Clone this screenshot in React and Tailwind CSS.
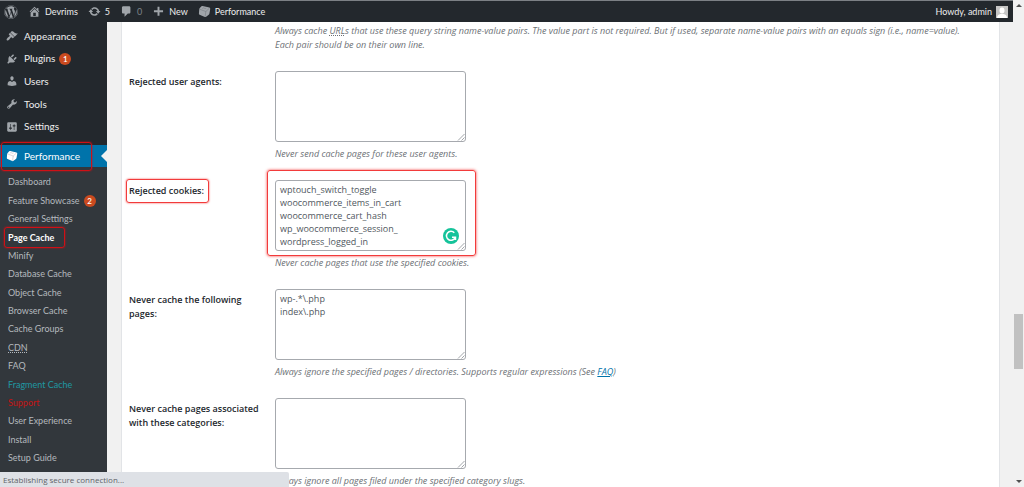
import { FaWordpress } from 'react-icons/fa6';

const ICONS = {
  home: 'M16 8.5l1.53 1.53-1.06 1.06L10 4.6l-6.47 6.49-1.06-1.06L10 2.5l4 4v-2h2v4zm-6-2.46l6 5.99V18H4v-5.97zM12 17v-5H8v5h4z',
  update:
    'M10.2 3.28c3.53 0 6.43 2.61 6.92 6h2.08l-3.5 4-3.5-4h2.32c-.45-1.97-2.21-3.45-4.32-3.45-1.45 0-2.73.71-3.54 1.78L4.95 5.66C6.23 4.2 8.11 3.28 10.2 3.28zm-.4 13.44c-3.52 0-6.43-2.61-6.92-6H.8l3.5-4c1.17 1.33 2.33 2.67 3.5 4H5.48c.45 1.97 2.21 3.45 4.32 3.45 1.45 0 2.73-.71 3.54-1.78l1.71 1.95c-1.28 1.46-3.15 2.38-5.25 2.38z',
  comment: 'M5 2h9c1.1 0 2 .9 2 2v7c0 1.1-.9 2-2 2h-2l-5 5v-5H5c-1.1 0-2-.9-2-2V4c0-1.1.9-2 2-2z',
  plus: 'M17 8v3h-5.5v5.500h-3V11H3V8h5.500V2.500h3V8z',
  appearance:
    'M14.48 11.06L7.41 3.99l1.5-1.5c.5-.56 2.3-.47 3.51.32 1.21.8 1.43 1.28 2.91 2.1 1.18.64 2.45 1.26 4.45.85zm-.71.71L6.7 4.7 4.93 6.47c-.39.39-.39 1.02 0 1.41l1.06 1.06c.39.39.39 1.03 0 1.42-.6.6-1.43 1.11-2.21 1.69-.35.26-.7.53-1.01.84C1.43 14.23.4 16.08 1.4 17.07c.99 1 2.84-.03 4.18-1.36.31-.31.58-.66.85-1.02.57-.78 1.08-1.61 1.69-2.21.39-.39 1.02-.39 1.41 0l1.06 1.06c.39.39 1.02.39 1.41 0z',
  plugins:
    'M13.11 4.36L9.87 7.6 8 5.73l3.24-3.24c.35-.34 1.05-.2 1.56.32.52.51.66 1.21.31 1.55zm-8 1.77l.91-1.12 9.01 9.01-1.19.84c-.71.71-2.63 1.16-3.82 1.16H6.14L4.9 17.26c-.59.59-1.54.59-2.12 0-.59-.58-.59-1.53 0-2.12l1.24-1.24v-3.88c0-1.13.4-3.19 1.09-3.89zm7.26 3.97l3.24-3.24c.34-.35 1.04-.21 1.55.31.52.51.66 1.21.31 1.55l-3.24 3.25z',
  users:
    'M10 9.25c-2.27 0-2.73-3.44-2.73-3.44C7 4.02 7.82 2 9.97 2c2.16 0 2.98 2.02 2.71 3.81 0 0-.41 3.44-2.68 3.44zm0 2.57L12.72 10c2.39 0 4.52 2.33 4.52 4.53v2.49s-3.65 1.13-7.24 1.13c-3.65 0-7.24-1.13-7.24-1.13v-2.49c0-2.25 1.94-4.48 4.47-4.48z',
  tools:
    'M16.68 9.77c-1.34 1.34-3.3 1.67-4.95.99l-5.41 6.52c-.99.99-2.59.99-3.58 0s-.99-2.59 0-3.57l6.52-5.42c-.68-1.65-.35-3.61.99-4.95 1.28-1.28 3.12-1.62 4.72-1.06l-2.89 2.89 2.82 2.82 2.86-2.87c.53 1.58.18 3.39-1.08 4.65zM3.81 16.21c.4.39 1.04.39 1.43 0 .4-.4.4-1.04 0-1.43-.39-.4-1.03-.4-1.43 0-.39.39-.39 1.03 0 1.43z',
  settings:
    'M18 16V4c0-1.1-.9-2-2-2H4c-1.1 0-2 .9-2 2v12c0 1.1.9 2 2 2h12c1.1 0 2-.9 2-2zM8 11h1c.55 0 1 .45 1 1s-.45 1-1 1H8v1.5c0 .28-.22.5-.5.5s-.5-.22-.5-.5V13H6c-.55 0-1-.45-1-1s.45-1 1-1h1V5.5c0-.28.22-.5.5-.5s.5.22.5.5V11zm5-2h-1c-.55 0-1-.45-1-1s.45-1 1-1h1V5.5c0-.28.22-.5.5-.5s.5.22.5.5V7h1c.55 0 1 .45 1 1s-.45 1-1 1h-1v5.5c0 .28-.22.5-.5.5s-.5-.22-.5-.5V9z',
};

const MENU = [
  { icon: 'appearance', label: 'Appearance' },
  { icon: 'plugins', label: 'Plugins', count: 1 },
  { icon: 'users', label: 'Users' },
  { icon: 'tools', label: 'Tools' },
  { icon: 'settings', label: 'Settings' },
];

const SUBMENU = [
  { label: 'Dashboard' },
  { label: 'Feature Showcase', count: 2 },
  { label: 'General Settings' },
  { label: 'Page Cache', current: true },
  { label: 'Minify' },
  { label: 'Database Cache' },
  { label: 'Object Cache' },
  { label: 'Browser Cache' },
  { label: 'Cache Groups' },
  { label: 'CDN', tone: 'underline decoration-dotted' },
  { label: 'FAQ' },
  { label: 'Fragment Cache', tone: 'text-[#1f98a3]' },
  { label: 'Support', tone: 'text-[#c41414]' },
  { label: 'User Experience' },
  { label: 'Install' },
  { label: 'Setup Guide' },
];

const COOKIES = [
  'wptouch_switch_toggle',
  'woocommerce_items_in_cart',
  'woocommerce_cart_hash',
  'wp_woocommerce_session_',
  'wordpress_logged_in',
].join('\n');

function Dashicon({ name, className }) {
  return (
    <svg viewBox="0 0 20 20" fill="currentColor" className={`shrink-0 ${className}`} aria-hidden="true">
      <path d={ICONS[name]} />
    </svg>
  );
}

function CubeIcon({ className }) {
  return (
    <svg viewBox="0 0 20 20" className={`shrink-0 ${className}`} aria-hidden="true">
      <path d="M7 1.500l10.500 2.500q1.500.5 1.300 2l-1.300 7.500q-.2 1-1 1.600l-4 3q-1 .7-2 .3L2.500 15q-1.300-.6-1.100-2l.5-6.500q.1-1 .9-1.700l2.500-2.700q.8-.8 1.700-.6z" fill="currentColor" />
      <path d="M2.500 6.500l9.500 3.500 5.500-5M12 10l-1 8" fill="none" stroke="#23282d" strokeOpacity=".3" strokeWidth="1" />
      <path d="M6.500 5.500q1.500-2 3-.7t3.300 0" fill="none" stroke="#23282d" strokeOpacity=".3" strokeWidth="1" />
    </svg>
  );
}

function Count({ children }) {
  return (
    <span className="flex size-3 shrink-0 items-center justify-center rounded-full bg-[#ca4a1f] text-[8px] leading-none font-semibold text-white">
      {children}
    </span>
  );
}

// red marker drawn over the highlighted parts
function Marker({ className }) {
  return <span className={`pointer-events-none absolute rounded-[3px] border ${className}`} aria-hidden="true" />;
}

function AdminBar() {
  return (
    <header className="flex h-[22px] shrink-0 items-center border-t border-[#7c8085] bg-[#23282d] pr-[5px] pl-1 font-['Lato','Open_Sans',sans-serif] text-[9px] text-[#eeeeee]">
      <nav className="flex flex-1 items-center gap-[10px]" aria-label="Toolbar">
        <a href="#about" aria-label="About WordPress" className="text-[#a0a5aa]">
          <FaWordpress size={14} />
        </a>
        <a href="#site" className="flex items-center gap-1">
          <Dashicon name="home" className="size-[13px] text-[#a0a5aa]" />
          Devrims
        </a>
        <a href="#updates" className="flex items-center gap-1">
          <Dashicon name="update" className="size-[13px] text-[#a0a5aa]" />
          5
        </a>
        <a href="#comments" className="flex items-center gap-1 text-[#7e8388]">
          <Dashicon name="comment" className="size-[13px] text-[#a0a5aa]" />
          0
        </a>
        <a href="#new" className="flex items-center gap-1">
          <Dashicon name="plus" className="size-[13px] text-[#a0a5aa]" />
          New
        </a>
        <a href="#performance" className="flex items-center gap-1">
          <CubeIcon className="size-[13px] text-[#a0a5aa]" />
          Performance
        </a>
      </nav>
      <a href="#profile" className="flex items-center gap-1">
        Howdy, admin
        <svg viewBox="0 0 12 12" className="size-3" aria-hidden="true">
          <rect width="12" height="12" fill="#c5c5c5" />
          <ellipse cx="6" cy="4.500" rx="2.500" ry="3" fill="#fff" />
          <path d="M1 12q0-3.500 3.500-4h3Q11 8.500 11 12z" fill="#fff" />
        </svg>
      </a>
    </header>
  );
}

function Sidebar() {
  return (
    <aside className="flex w-[107px] shrink-0 flex-col bg-[#23282d] pt-[3px] font-['Lato','Open_Sans',sans-serif]">
      <ul className="flex h-[113px] flex-col text-[10px] text-[#eeeeee]">
        {MENU.map((item) => (
          <li key={item.label} className="flex flex-1">
            <a href={`#${item.icon}`} className="flex flex-1 items-center gap-1 pl-[6px]">
              <Dashicon name={item.icon} className="mr-[2px] size-3 text-[#a0a5aa]" />
              {item.label}
              {item.count && <Count>{item.count}</Count>}
            </a>
          </li>
        ))}
      </ul>

      <div className="relative mt-[7px] shrink-0">
        <a href="#performance" className="flex h-[22px] items-center gap-[6px] bg-[#0073aa] pl-[6px] text-[10px] text-white">
          <CubeIcon className="size-3" />
          Performance
        </a>
        <span className="absolute top-[5px] right-0 border-y-[6px] border-r-[6px] border-y-transparent border-r-[#f1f1f1]" />
        <Marker className="-top-[3px] left-px h-[29px] w-[91px] border-[#d01016] shadow-[0_0_2px_#d01016]" />
      </div>

      <div className="flex-1 bg-[#32373c] pt-[6px]">
        <ul className="flex h-[294px] flex-col text-[9px] text-[#b4b9be]">
          {SUBMENU.map((item) => (
            <li key={item.label} className="relative flex flex-1">
              <a href="#submenu" className={`flex flex-1 items-center gap-1 pl-2 ${item.current ? 'font-bold text-white' : item.tone || ''}`}>
                {item.label}
                {item.count && <Count>{item.count}</Count>}
              </a>
              {item.current && <Marker className="-top-px left-1 h-[21px] w-[61px] border-[#d01016] shadow-[0_0_2px_#d01016]" />}
            </li>
          ))}
        </ul>
      </div>
    </aside>
  );
}

function GrammarlyBadge() {
  return (
    <svg viewBox="0 0 16 16" className="absolute right-[7px] bottom-[7px] size-4" aria-hidden="true">
      <circle cx="8" cy="8" r="8" fill="#15c39a" />
      <path d="M11.300 4.800a4.500 4.500 0 1 0 .9 4.600M12.500 12V9.200H9" fill="none" stroke="#fff" strokeWidth="1.500" />
    </svg>
  );
}

function Field({ id, label, value = '', help, marked }) {
  return (
    <div className="flex h-[109px]">
      <div className="w-[146px] shrink-0 pt-[4px] pr-3 text-[9px] leading-[14px] font-semibold text-[#23282d]">
        <label htmlFor={id} className="relative inline-block">
          {label}
          {marked && <Marker className="-top-[5px] -right-[5px] -bottom-[5px] -left-[3px] border-[#f23b3b] shadow-[0_0_2px_#f23b3b]" />}
        </label>
      </div>
      <div className="min-w-0 flex-1">
        <div className="relative w-[191px]">
          <textarea
            id={id}
            defaultValue={value}
            spellCheck={false}
            className="block h-[71px] w-full resize-none overflow-hidden rounded-[3px] border border-[#a6a9ae] bg-white px-1 py-[2px] text-[9px] leading-[13px] text-[#50575e]"
          />
          <svg viewBox="0 0 8 8" className="absolute right-px bottom-px size-2" aria-hidden="true">
            <path d="M1 7.500L7.500 1M4.500 7.500l3-3" stroke="#8c8f94" strokeWidth=".8" />
          </svg>
          {marked && (
            <>
              <GrammarlyBadge />
              <Marker className="-top-[10px] -right-[10px] -bottom-[5px] -left-2 border-[#f23b3b] shadow-[0_0_3px_#f23b3b]" />
            </>
          )}
        </div>
        <p className="mt-[5px] text-[9px] leading-[14px] text-[#6c7075] italic">{help}</p>
      </div>
    </div>
  );
}

function Scrollbar() {
  return (
    <div className="flex w-[11px] shrink-0 flex-col items-center bg-[#f1f1f1] py-1" aria-hidden="true">
      <span className="border-x-[3px] border-b-[3px] border-x-transparent border-b-[#505050]" />
      <span className="mt-[307px] h-[55px] w-[9px] bg-[#c1c1c1]" />
      <span className="mt-auto border-x-[3px] border-t-[3px] border-x-transparent border-t-[#505050]" />
    </div>
  );
}

export default function App() {
  return (
    <div className="relative flex h-screen overflow-hidden bg-[#f1f1f1] font-['Open_Sans','Noto_Sans',sans-serif]">
      <div className="flex min-w-0 flex-1 flex-col">
        <AdminBar />
        <div className="flex min-h-0 flex-1">
          <Sidebar />
          <main className="mr-[13px] ml-[14px] min-w-0 flex-1 overflow-hidden border-x border-[#e2e4e7] bg-white pt-[2px] pl-[7px]">
            <p className="mr-6 mb-[19px] ml-[146px] text-[9px] leading-[14px] text-[#6c7075] italic">
              Always cache <abbr className="underline decoration-dotted">URL</abbr>s that use these query string name-value
              pairs. The value part is not required. But if used, separate name-value pairs with an equals sign (i.e.,
              name=value). Each pair should be on their own line.
            </p>
            <Field id="agents" label="Rejected user agents:" help="Never send cache pages for these user agents." />
            <Field id="cookies" label="Rejected cookies:" value={COOKIES} help="Never cache pages that use the specified cookies." marked />
            <Field
              id="pages"
              label="Never cache the following pages:"
              value={'wp-.*\\.php\nindex\\.php'}
              help={
                <>
                  Always ignore the specified pages / directories. Supports regular expressions (See{' '}
                  <a href="#faq" className="text-[#0073aa] underline">FAQ</a>)
                </>
              }
            />
            <Field
              id="categories"
              label="Never cache pages associated with these categories:"
              help="Always ignore all pages filed under the specified category slugs."
            />
          </main>
        </div>
      </div>
      <Scrollbar />
      <div className="absolute bottom-0 left-0 h-[15px] w-[289px] rounded-tr-[2px] bg-[#dee1e6] pl-[3px] text-[8px] leading-[15px] text-[#5f6368]">
        Establishing secure connection...
      </div>
    </div>
  );
}
